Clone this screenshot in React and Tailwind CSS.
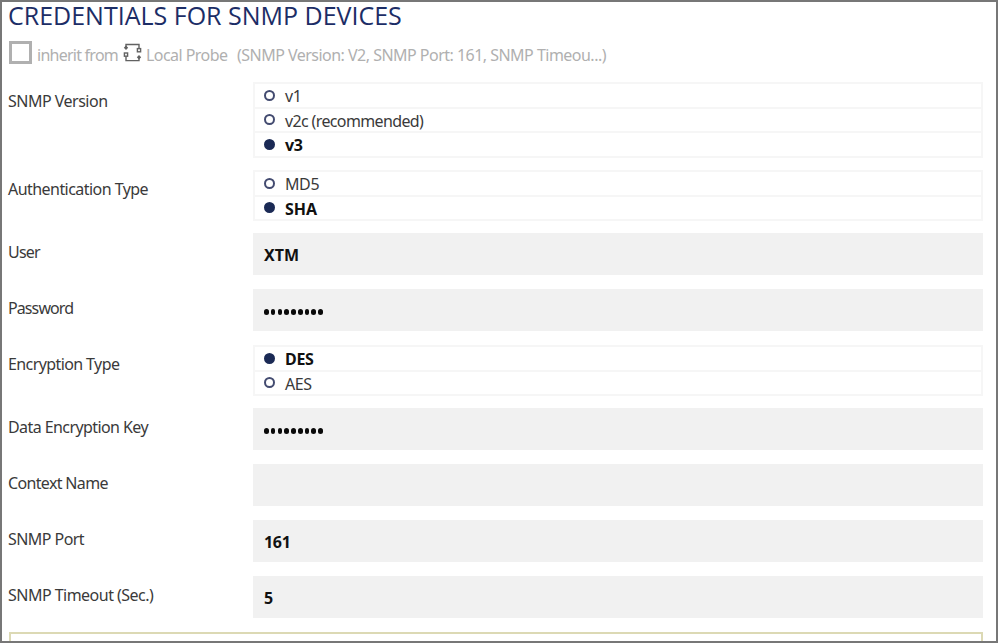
const INK = "text-[#3a3a3a]";

function Label({ text, track }) {
  return (
    <div className={`w-[245px] shrink-0 h-[37px] flex items-center whitespace-nowrap text-[16px] ${INK} ${track}`}>
      {text}
    </div>
  );
}

function Options({ items, selected }) {
  return (
    <div className="w-[730px] border-2 border-b-0 border-[#f6f6f6]">
      {items.map(([name, track]) => {
        const on = name === selected;
        return (
          <div key={name} className="h-[24.5px] border-b-2 border-[#f6f6f6] flex items-center pl-[9px]">
            <span
              className={`size-[11px] shrink-0 rounded-full border-2 mr-[10px] ${
                on ? "border-[#1b2a55] bg-[#1b2a55]" : "border-[#434b70] bg-white"
              }`}
            />
            <span className={`text-[16px] leading-5 relative top-px ${track} ${on ? "font-bold text-[#111]" : INK}`}>
              {name}
            </span>
          </div>
        );
      })}
    </div>
  );
}

function Field({ value, track }) {
  return (
    <div className={`w-[730px] h-[42px] bg-[#f1f1f1] flex items-center pl-[11px] pt-px text-[16px] font-bold text-[#111] ${track || ""}`}>
      {value}
    </div>
  );
}

function Secret() {
  return (
    <div className="w-[730px] h-[42px] bg-[#f1f1f1] flex items-center pl-[11px] pt-[4px] gap-[2.2px]">
      {Array.from({ length: 9 }, (_, i) => (
        <span key={i} className="w-[4.6px] h-[6px] rounded-full bg-[#0a0a0a]" />
      ))}
    </div>
  );
}

function Row({ label, track, className, children }) {
  return (
    <div className={`flex items-start pt-[2px] ${className}`}>
      <Label text={label} track={track} />
      {children}
    </div>
  );
}

export default function App() {
  return (
    <div className="w-[998px] h-[643px] overflow-hidden bg-white border-2 border-[#777] pl-[6px] font-['Noto_Sans','Open_Sans',sans-serif]">
      <h1 className="h-[28px] pb-[2px] flex items-center whitespace-nowrap font-['Open_Sans','Noto_Sans',sans-serif] font-normal text-[25px] leading-[26px] text-[#1c2d66]">
        CREDENTIALS FOR SNMP DEVICES
      </h1>
      <div className="h-[50px] pt-[10px] flex items-start whitespace-nowrap text-[16px] leading-[30px] text-[#b0b0b0]">
        <span className="mt-px ml-px size-[23px] shrink-0 border-[3px] border-[#b0b0b0]" />
        <span className="ml-[5px] w-[86px] tracking-[-0.75px]">inherit from</span>
        <svg className="mt-[3px] w-[19px] h-[20px] shrink-0" viewBox="0 0 19 20" fill="none" stroke="#626262" strokeWidth="1.4">
          <path d="M3 4.5V1.5H16V5.2M16 14.5V17.6H3V13.5" />
          <rect x="14.4" y="5.6" width="3.2" height="3.2" />
          <rect x="1.4" y="10" width="3.2" height="3.2" />
          <path d="M3 2.5L5.2 4.8L3 7.1L0.8 4.8ZM16 12L18.2 14.3L16 16.6L13.8 14.3Z" fill="#626262" stroke="none" />
        </svg>
        <span className="ml-[4px] w-[91px] tracking-[-0.55px]">Local Probe</span>
        <span className="tracking-[-0.52px]">(SNMP Version: V2, SNMP Port: 161, SNMP Timeou...)</span>
      </div>
      <Row label="SNMP Version" track="tracking-[-0.5px]" className="h-[88px]">
        <Options items={[["v1", "tracking-[-0.5px]"], ["v2c (recommended)", "tracking-[-0.63px]"], ["v3", "tracking-[-0.3px]"]]} selected="v3" />
      </Row>
      <Row label="Authentication Type" track="tracking-[-0.55px]" className="h-[63px]">
        <Options items={[["MD5", "tracking-[-0.4px]"], ["SHA", ""]]} selected="SHA" />
      </Row>
      <Row label="User" track="tracking-[-0.8px]" className="h-[56px]">
        <Field value="XTM" />
      </Row>
      <Row label="Password" track="tracking-[-0.9px]" className="h-[56px]">
        <Secret />
      </Row>
      <Row label="Encryption Type" track="tracking-[-0.6px]" className="h-[63px]">
        <Options items={[["DES", "tracking-[-0.3px]"], ["AES", "tracking-[-0.4px]"]]} selected="DES" />
      </Row>
      <Row label="Data Encryption Key" track="tracking-[-0.58px]" className="h-[56px]">
        <Secret />
      </Row>
      <Row label="Context Name" track="tracking-[-0.65px]" className="h-[56px]">
        <Field value="" />
      </Row>
      <Row label="SNMP Port" track="tracking-[-0.55px]" className="h-[56px]">
        <Field value="161" track="tracking-[-0.3px]" />
      </Row>
      <Row label="SNMP Timeout (Sec.)" track="tracking-[-0.52px]" className="h-[56px]">
        <Field value="5" />
      </Row>
      <div className="mt-[2px] ml-px w-[974px] h-10 border-2 border-[#dcd9b4]" />
    </div>
  );
}
